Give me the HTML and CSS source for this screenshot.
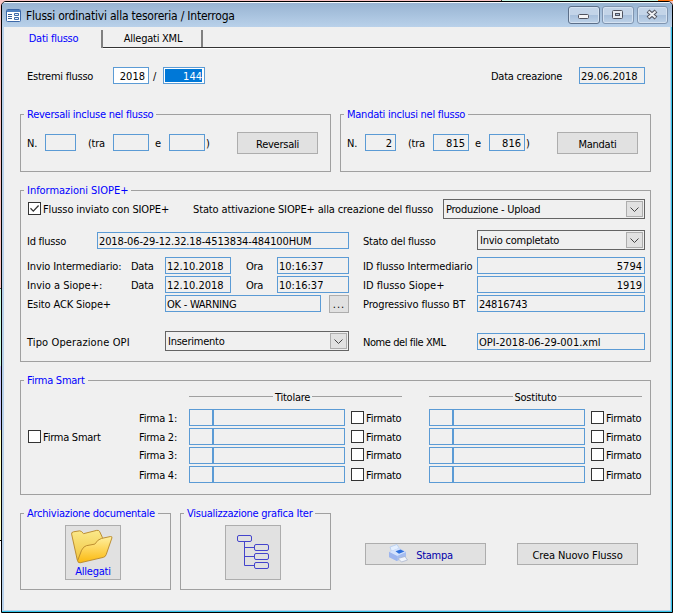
FILE: index.html
```
<!DOCTYPE html>
<html lang="it">
<head>
<meta charset="utf-8">
<title>Flussi ordinativi alla tesoreria / Interroga</title>
<link rel="stylesheet" href="styles.css">
</head>
<body>
<div class="window">
  <header class="titlebar">
    <svg class="app-icon" width="15" height="13" viewBox="0 0 15 13"><rect x=".5" y=".5" width="14" height="12" rx="1" fill="#fff" stroke="#3c68a8"/><path d="M1 1h13v2H1z" fill="#4f7fc0"/><path d="M2 5.500h4M2 7.500h4M2 9.500h4" stroke="#3c5f98"/><path d="M8.500 4.500h4v2h-4zM8.500 8.500h4v2h-4z" fill="#e8eef8" stroke="#3c68a8"/></svg>
    <h1 class="title">Flussi ordinativi alla tesoreria / Interroga</h1>
    <div class="controls">
      <span class="control"><svg width="30" height="16" viewBox="0 0 30 16"><rect x="9.500" y="7.500" width="10" height="4" rx="1" fill="#f4f4f6" stroke="#50535f"/></svg></span>
      <span class="control"><svg width="30" height="16" viewBox="0 0 30 16"><rect x="9.500" y="3.500" width="10" height="8" rx="1" fill="#e9edf2" stroke="#50535f"/><rect x="12.500" y="6.500" width="4" height="2" fill="#a9c0dc" stroke="#50535f"/></svg></span>
      <span class="control last"><svg width="29" height="16" viewBox="0 0 29 16"><path d="M10 4l8 7M18 4l-8 7" stroke="#50535f" stroke-width="4.200"/><path d="M10.500 4.400l7 6.200M17.500 4.400l-7 6.200" stroke="#f0f2f5" stroke-width="2"/></svg></span>
    </div>
  </header>
  <main class="client">
    <nav class="tabs">
      <div class="tab active"><span>Dati flusso</span></div>
      <div class="tab"><span>Allegati XML</span></div>
      <div class="tab-rest"></div>
    </nav>
    <div class="page">
      <div class="row top">
        <span>Estremi flusso</span><span class="field num white">2018</span><span class="slash">/</span><span class="field num white"><span class="selected">144</span></span><span></span><span>Data creazione</span><span class="field data">29.06.2018</span>
      </div>

      <div class="pair counts">
        <fieldset>
          <legend>Reversali incluse nel flusso</legend>
          <div class="row count">
            <span>N.</span><span class="field num"></span><span></span><span>(tra</span><span class="field num"></span><span class="and">e</span><span class="field num"></span><span class="paren">)</span><span class="button">Reversali</span>
          </div>
        </fieldset>
        <fieldset>
          <legend>Mandati inclusi nel flusso</legend>
          <div class="row count">
            <span>N.</span><span class="field num">2</span><span></span><span>(tra</span><span class="field num">815</span><span class="and">e</span><span class="field num">816</span><span class="paren">)</span><span class="button">Mandati</span>
          </div>
        </fieldset>
      </div>

      <fieldset class="siope">
        <legend class="siope-legend">Informazioni SIOPE+</legend>
        <div class="row status">
          <span class="check"><svg width="11" height="11" viewBox="0 0 11 11"><path d="M1.500 5.300l2.800 2.800L9.600 2.500" fill="none" stroke="#333" stroke-width="1.300"/></svg></span><span class="medium">Flusso inviato con SIOPE+</span><span class="medium">Stato attivazione SIOPE+ alla creazione del flusso</span><span class="select">Produzione - Upload<i class="arrow"><svg width="9" height="5" viewBox="0 0 9 5"><path d="M.5.5l4 4 4-4" fill="none" stroke="#444"/></svg></i></span>
        </div>
        <div class="row ident">
          <span>Id flusso</span><span class="field medium">2018-06-29-12.32.18-4513834-484100HUM</span><span></span><span>Stato del flusso</span><span class="select">Invio completato<i class="arrow"><svg width="9" height="5" viewBox="0 0 9 5"><path d="M.5.5l4 4 4-4" fill="none" stroke="#444"/></svg></i></span>
        </div>
        <div class="row sent">
          <span class="medium">Invio Intermediario:</span><span>Data</span><span class="field data">12.10.2018</span><span></span><span>Ora</span><span class="field data">10:16:37</span><span></span><span class="medium">ID flusso Intermediario</span><span class="field num">5794</span>
        </div>
        <div class="row sent">
          <span class="loose">Invio a Siope+:</span><span>Data</span><span class="field data">12.10.2018</span><span></span><span>Ora</span><span class="field data">10:16:37</span><span></span><span class="loose">ID flusso Siope+</span><span class="field num">1919</span>
        </div>
        <div class="row outcome">
          <span class="medium">Esito ACK Siope+</span><span class="field">OK - WARNING</span><span></span><span class="button dots">...</span><span></span><span class="medium">Progressivo flusso BT</span><span class="field">24816743</span>
        </div>
        <div class="row operation">
          <span class="wide">Tipo Operazione OPI</span><span class="select">Inserimento<i class="arrow"><svg width="9" height="5" viewBox="0 0 9 5"><path d="M.5.5l4 4 4-4" fill="none" stroke="#444"/></svg></i></span><span></span><span class="tight">Nome del file XML</span><span class="field loose">OPI-2018-06-29-001.xml</span>
        </div>
      </fieldset>

      <fieldset class="firma">
        <legend>Firma Smart</legend>
        <div class="firma-body">
          <div class="smart"><span class="check"></span><span>Firma Smart</span></div>
          <div>
            <div class="heads"><div class="head"><span>Titolare</span></div><div class="head"><span>Sostituto</span></div></div>
            <div class="row sign"><span>Firma 1:</span><span class="field"></span><span class="field"></span><span class="check"></span><span>Firmato</span><span></span><span class="field"></span><span class="field"></span><span class="check"></span><span>Firmato</span></div>
            <div class="row sign"><span>Firma 2:</span><span class="field"></span><span class="field"></span><span class="check"></span><span>Firmato</span><span></span><span class="field"></span><span class="field"></span><span class="check"></span><span>Firmato</span></div>
            <div class="row sign raised"><span>Firma 3:</span><span class="field"></span><span class="field"></span><span class="check"></span><span>Firmato</span><span></span><span class="field"></span><span class="field"></span><span class="check"></span><span>Firmato</span></div>
            <div class="row sign"><span>Firma 4:</span><span class="field"></span><span class="field"></span><span class="check"></span><span>Firmato</span><span></span><span class="field"></span><span class="field"></span><span class="check"></span><span>Firmato</span></div>
          </div>
        </div>
      </fieldset>

      <div class="bottom">
        <fieldset>
          <legend>Archiviazione documentale</legend>
          <div class="button tile">
            <svg width="46" height="38" viewBox="0 0 46 38">
              <defs><linearGradient id="back" x1="0" y1="0" x2="0" y2="1"><stop offset="0" stop-color="#fbe98a"/><stop offset="1" stop-color="#f0c33c"/></linearGradient><linearGradient id="front" x1="0" y1="0" x2="0" y2="1"><stop offset="0" stop-color="#fff0a0"/><stop offset="1" stop-color="#fbb90e"/></linearGradient></defs>
              <path d="M1.500 6.500Q1 4.500 3.500 4L10 3q2 0 4 3L28 2.500q2.500-.5 3.200 1.500L34 10l-1 18L10 36 7.500 34z" fill="url(#back)" stroke="#b98a2c"/>
              <path d="M7.800 34.500L12 23.500q2-4 5-4.800L26 17q3-5 7-6l9.500-2q2-.2 1.500 1.500L38 28q-.8 2.500-3 3L10.500 36.700q-2.500.3-2.700-2.200z" fill="url(#front)" stroke="#b98a2c"/>
            </svg>
            <span>Allegati</span>
          </div>
        </fieldset>
        <fieldset>
          <legend>Visualizzazione grafica Iter</legend>
          <div class="button tile tree">
            <svg width="34" height="36" viewBox="0 0 34 36" fill="none" stroke="#4444cc"><rect x="1.500" y="1.500" width="14" height="6" rx="1.500"/><rect x="18.500" y="10.500" width="14" height="6" rx="1.500"/><rect x="18.500" y="19.500" width="14" height="6" rx="1.500"/><rect x="18.500" y="28.500" width="14" height="6" rx="1.500"/><path d="M8.500 8v23.500H18M8.500 13.500H18M8.500 22.500H18"/></svg>
          </div>
        </fieldset>
        <div class="button action print">
          <svg width="20" height="19" viewBox="0 0 20 19"><path d="M2 3l7-2.500 3 5L4 9z" fill="#e5f0ff" stroke="#b4cdf2" stroke-width=".8"/><path d="M1 8l10-4 7 4v5l-9 4-8-4z" fill="#a5bdf0"/><path d="M1 8l10-4 7 4-9 4z" fill="#d5e3fc"/><path d="M7.500 7.200l5-1.700 4 2-5.500 2.200z" fill="#2e6fdc"/><path d="M1 8l8 4v5l-8-4z" fill="#9db5ee"/><path d="M10 14.500l7-2 2.500 3.500-6 2z" fill="#f1f5fc" stroke="#a5b0ca" stroke-width=".7"/></svg>
          <span>Stampa</span>
        </div>
        <div class="button action create">Crea Nuovo Flusso</div>
      </div>
    </div>
  </main>
</div>
</body>
</html>
```
FILE: styles.css
```
* { box-sizing: border-box; }
html, body { margin: 0; height: 100%; overflow: hidden; }
body {
  padding: 1px 0 0 1px;
  font: 11px/17px "DejaVu Sans Condensed", "DejaVu Sans", sans-serif;
  font-stretch: condensed;
  letter-spacing: -0.25px;
  color: #000;
  white-space: nowrap;
  background:
    linear-gradient(90deg, #f9c4c4 501px, #333 501px 502px, #c9f7e4 502px 658px, #ff7414 658px) 0 0 / 100% 1px no-repeat,
    linear-gradient(#f9c4c4 288px, #555 288px 289px, #c9fbe4 289px 366px, #c8c8ff 366px 430px, #ffffc8 430px 540px, #000 540px 541px, #fff 541px);
}
.window {
  width: 672px; height: 612px;
  border: 1px solid #000;
  border-radius: 5px 5px 0 0;
  background: #b9d1ea;
  box-shadow: inset -1px -1px 0 #35c5ea;
  overflow: hidden;
}
.titlebar {
  height: 25px;
  display: flex;
  align-items: center;
  padding: 1px 4px 0 5px;
  background: linear-gradient(#f4f8fc 1px, #98b4d2 1px, #b9d1ea);
}
.app-icon { margin: 0 4px 0 -1px; }
.title { margin: 2px 0 0 1px; font-size: 12px; font-weight: normal; letter-spacing: -0.22px; }
.controls { display: flex; margin: -1px 0 0 auto; gap: 2px; }
.control {
  width: 32px; height: 18px;
  border: 1px solid #5c6f89;
  border-radius: 3px;
  box-shadow: inset 0 0 0 1px #d5e2f1;
  background: linear-gradient(#c3d4e8 48%, #a8c0dc 52%, #bed2e8);
}
.control + .control { border-color: #8095b0; }
.control.last { width: 31px; margin-left: 1px; }
.control svg { display: block; }
.client { margin: 0 2px 0 2px; height: 583px; background: #f0f0f0; }

.tabs { display: flex; height: 21px; line-height: 23px; text-align: center; }
.tab { width: 100px; position: relative; }
.tab::after { content: ""; position: absolute; right: 0; top: 3px; bottom: 0; width: 2px; background: #808080; }
.tab.active { width: 99px; color: #00f; }
.tab-rest { flex: 1; }
.tab + .tab, .tab-rest { border-bottom: 1px solid #333; box-shadow: 0 1px #fff; }

.page { padding: 19px 0 0 16px; }
.row { display: grid; align-items: center; height: 17px; }
.row > span:not([class]), .row > .slash, .row > .and, .row > .paren,
.medium:not(.field), .loose:not(.field), .wide, .tight { padding-top: 2px; line-height: 15px; }
.field { height: 17px; line-height: 17px; border: 1px solid #5b9bd5; padding: 0 2px 0 1px; }
.data { letter-spacing: 0; }
.medium { letter-spacing: -0.13px; }
.loose { letter-spacing: 0; }
.wide { letter-spacing: .12px; }
.tight { letter-spacing: -0.42px; }
.num { text-align: right; letter-spacing: 0; }
.white { background: #fff; }
.selected { display: block; margin: 1px 0 0 0; height: 13px; line-height: 15px; background: #0078d7; color: #fff; }
.slash { padding-left: 4px; }

.row.top { grid-template-columns: 86px 36px 14px 42px 286px 88px 66px; padding-left: 7px; }
.row.top .num { padding-right: 3px; }
.row.top .white + .slash + .white { padding-right: 2px; }

fieldset { border: 1px solid #a0a0a0; margin: 0; padding: 0; min-width: 0; }
legend { height: 14px; line-height: 16px; margin-left: 3px; padding: 0 3px; color: #00f; }
.siope-legend { letter-spacing: -0.03px; }
.pair { display: flex; gap: 9px; margin-top: 23px; }
.pair fieldset { width: 311px; height: 65px; }
.row.count { grid-template-columns: 18px 31px 12px 25px 36px 20px 36px 32px 81px; height: 22px; margin: 11px 0 0 6px; }
.count > :not(.button) { margin-top: -2px; }
.count .num { padding-right: 3px; }
.and { padding-left: 6px; }
.paren { padding-left: 1px; }
.button { height: 22px; line-height: 23px; text-align: center; border: 1px solid #adadad; background: #e1e1e1; }

.siope { width: 631px; height: 179px; margin-top: 11px; }
.select {
  height: 20px; line-height: 20px;
  display: flex; justify-content: space-between; align-items: center;
  border: 1px solid #646464; padding: 1px 1px 0 2px;
}
.arrow { display: grid; place-items: center; width: 17px; height: 16px; margin-top: -1px; border: 1px solid #adadad; background: #e1e1e1; }
.check { display: block; width: 13px; height: 13px; border: 1px solid #333; background: #fff; }
.check svg { display: block; }
.row.status { grid-template-columns: 15px 150px 250px 202px; height: 20px; margin: 2px 0 0 7px; }
.row.status .check, .row.status .medium { margin-top: -1px; }
.row.ident { grid-template-columns: 70px 252px 14px 114px 168px; height: 20px; margin: 11px 0 7px 6px; }
.row.sent { grid-template-columns: 104px 34px 66px 15px 31px 72px 14px 114px 168px; margin: 0 0 2px 6px; }
.row.outcome { grid-template-columns: 138px 156px 8px 20px 14px 114px 168px; margin-left: 6px; }
.row.operation { grid-template-columns: 138px 184px 14px 114px 168px; height: 20px; margin: 19px 0 0 6px; }
.dots { height: 18px; line-height: 18px; letter-spacing: 1px; margin-bottom: -1px; }

.firma { width: 631px; height: 122px; margin-top: 11px; }
.firma-body { display: grid; grid-template-columns: 111px 1fr; margin-left: 7px; }
.smart { display: flex; gap: 2px; align-items: center; height: 17px; margin-top: 41px; }
.smart span + span { padding-top: 2px; }
.heads { display: flex; gap: 27px; margin: 1px 0 4px 50px; }
.head { width: 213px; display: flex; align-items: center; gap: 2px; height: 17px; }
.head span { padding-top: 1px; }
.head::before, .head::after { content: ""; flex: 1; height: 1px; background: #a0a0a0; }
.head:first-child::before { flex: 0 0 84px; }
.row.sign { grid-template-columns: 50px 24px 132px 6px 15px 36px 27px 24px 132px 6px 15px 36px; margin-bottom: 2px; }
.sign > :nth-child(4), .sign > :nth-child(9) { grid-column: span 2; justify-self: end; margin-right: 2px; }
.raised > :not(.field) { position: relative; top: -1px; }

.bottom { display: flex; margin-top: 11px; height: 84px; }
.bottom fieldset { width: 151px; margin-right: 9px; }
.tile { width: 56px; height: 55px; margin: 5px auto 0 44px; display: flex; flex-direction: column; align-items: center; color: #00f; line-height: 15px; }
.tile svg { margin: 2px 2px 0 0; }
.tile.tree svg { margin: 8px 0 0; }
.action { width: 121px; margin: 37px 31px 0 0; }
.create { letter-spacing: -0.1px; }
.bottom fieldset + .action { margin-left: 25px; }
.print { display: flex; justify-content: center; gap: 8px; padding-right: 10px; color: #00a; }
```
